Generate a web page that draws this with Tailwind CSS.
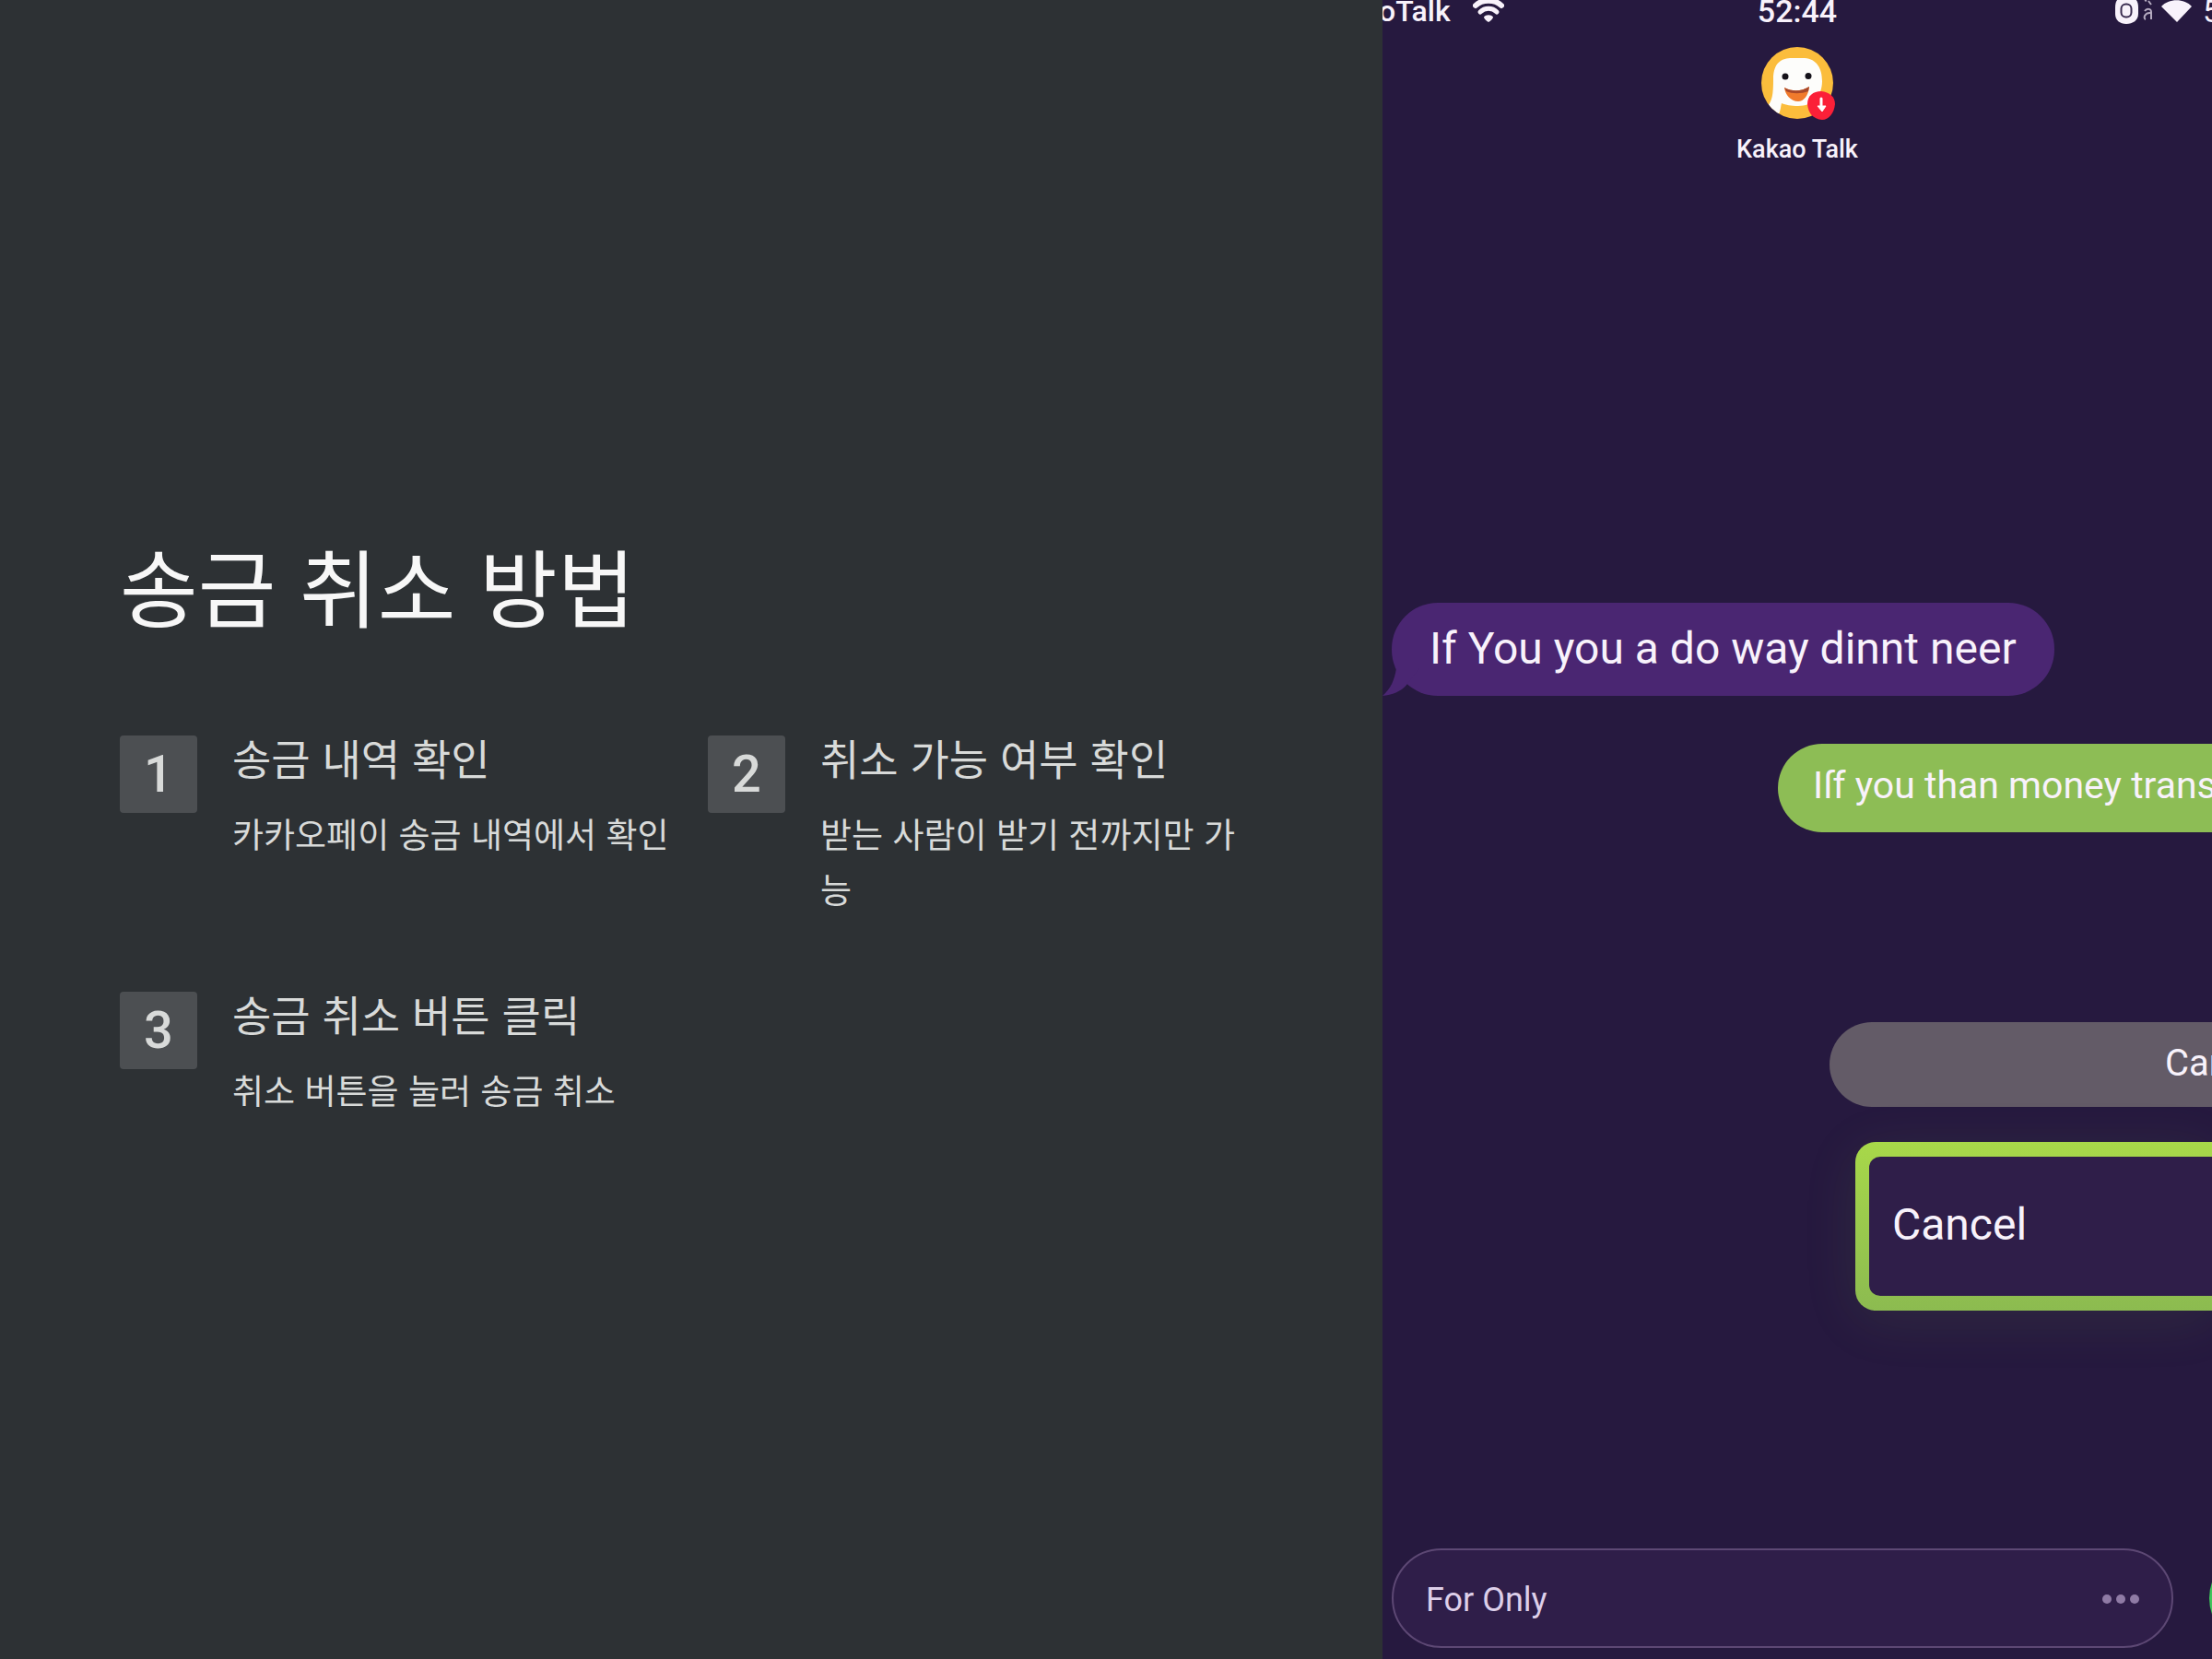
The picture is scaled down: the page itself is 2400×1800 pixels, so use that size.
<!DOCTYPE html>
<html lang="ko">
<head>
  <meta charset="UTF-8">
  <meta name="viewport" content="width=device-width, initial-scale=1.0">
  <title>송금 취소 방법</title>
  <script src="https://cdn.jsdelivr.net/npm/@tailwindcss/browser@4"></script>
</head>
<body class="bg-[#2d3134]">
  <main class="flex min-h-screen">

    <!-- Steps -->
    <section class="w-5/8 shrink-0 flex flex-col justify-center pl-[130px] pr-[136px] pb-[10px] text-[#d8dad9] font-['Noto_Sans_CJK_KR',sans-serif]">
      <h1 class="text-[92px] leading-[112px] text-[#f7f7f7]">송금 취소 방법</h1>

      <ol class="mt-[106px] grid grid-cols-2 gap-x-[42px] gap-y-20">
        <li class="flex items-start gap-[38px]">
          <span class="mt-0.5 size-[84px] shrink-0 rounded-sm bg-[#4c4f52] text-center text-[56px] leading-[84px] font-medium font-[Roboto,sans-serif]">1</span>
          <div>
            <h2 class="text-[46px] leading-[50px]">송금 내역 확인</h2>
            <p class="mt-7 text-[37px] leading-[60px]">카카오페이 송금 내역에서 확인</p>
          </div>
        </li>
        <li class="flex items-start gap-[38px]">
          <span class="mt-0.5 size-[84px] shrink-0 rounded-sm bg-[#4c4f52] text-center text-[56px] leading-[84px] font-medium font-[Roboto,sans-serif]">2</span>
          <div>
            <h2 class="text-[46px] leading-[50px]">취소 가능 여부 확인</h2>
            <p class="mt-7 text-[37px] leading-[60px]">받는 사람이 받기 전까지만 가능</p>
          </div>
        </li>
        <li class="flex items-start gap-[38px]">
          <span class="mt-0.5 size-[84px] shrink-0 rounded-sm bg-[#4c4f52] text-center text-[56px] leading-[84px] font-medium font-[Roboto,sans-serif]">3</span>
          <div>
            <h2 class="text-[46px] leading-[50px]">송금 취소 버튼 클릭</h2>
            <p class="mt-7 text-[37px] leading-[60px]">취소 버튼을 눌러 송금 취소</p>
          </div>
        </li>
      </ol>
    </section>

    <!-- Phone screen, runs off the right edge -->
    <section class="flex-1 min-w-0 flex flex-col overflow-hidden bg-[#26193f] text-[#f8f2fb] font-[Roboto,sans-serif]">
      <header class="grid grid-cols-[1fr_auto_1fr] h-8 items-start whitespace-nowrap">
        <div class="flex items-start gap-6 -ml-1">
          <span class="text-[32px] leading-[24px] font-medium">oTalk</span>
          <svg class="w-[34px] h-[28px] -mt-1" viewBox="0 0 34 28" fill="none" stroke="currentColor" stroke-linecap="round">
            <path d="M3 10C10 3 24 3 31 10" stroke-width="6"/>
            <path d="M8 17C13 12 21 12 26 17" stroke-width="5"/>
            <path d="M12 22.500C14 19.500 20 19.500 22 22.500C22 24 19 27 17 28C15 27 12 24 12 22.500Z" fill="currentColor" stroke="none"/>
          </svg>
        </div>
        <span class="text-[34px] leading-[24px] font-medium">52:44</span>
        <div class="flex items-start justify-end -mr-[9px]">
          <svg class="w-[84px] h-[28px] mr-3" viewBox="0 0 84 28" fill="none">
            <path d="M1 8C1 -1 6 -4 13 -4C21 -4 26 -1 26 8V15C26 22 20 26 13 26C6 26 1 22 1 15Z" fill="#f8f2fb"/>
            <rect x="7.500" y="4.500" width="11" height="14" rx="5" fill="#f8f2fb" stroke="#3a2c50" stroke-width="2"/>
            <path d="M33 0L35 1M37 1L40 5M33 12C35 9 40 9 40 13V21M40 14C33 13 31 20 34 21" stroke="#b5abc0" stroke-width="2"/>
            <path d="M51 7C59 -2 76 -2 84 7L68 24Z" fill="#f8f2fb"/>
          </svg>
          <span class="text-[34px] leading-[24px]">5</span>
        </div>
      </header>

      <div class="mt-[18px] flex flex-col items-center">
        <svg class="w-[84px] h-[82px]" viewBox="-3 0 84 82">
          <defs>
            <clipPath id="face"><circle cx="39" cy="40" r="39"/></clipPath>
          </defs>
          <circle cx="39" cy="40" r="39" fill="#fbbd3c"/>
          <g clip-path="url(#face)">
            <path d="M13 36C13 17 23 13 33 13H47C60 14 66 24 66 38C66 54 56 65 40 65C32 65 27 64 22 62C21 66 21 69 19 74L6 66C12 60 13 52 13 36Z" fill="#fdfdfb"/>
            <path d="M25 45C34 50 44 49 52 44C51 54 46 60 40 60C32 60 26 53 25 45Z" fill="#f07a2c"/>
            <path d="M25 45C34 50 44 49 52 44L51 49C43 52 34 52 27 49Z" fill="#a8482a"/>
            <circle cx="26" cy="33" r="3.500" fill="#15121a"/>
            <circle cx="51" cy="32.500" r="3.500" fill="#15121a"/>
          </g>
          <path d="M50 63C50 54 56 49 65 49C74 50 80 55 80 63C79 73 73 80 66 80C56 79 51 73 50 63Z" fill="#fb2038"/>
          <path d="M65 57V67" stroke="#fff" stroke-width="3" stroke-linecap="round"/>
          <path d="M61 65L66 71L70 65Z" fill="#fff" stroke="#fff" stroke-linejoin="round"/>
        </svg>
        <span class="mt-3 text-[27px] leading-9 font-medium">Kakao Talk</span>
      </div>

      <div class="mt-[474px] flex flex-col whitespace-nowrap">
        <div class="relative self-start ml-[10px] h-[101px] px-[41px] rounded-[50px] bg-[#4a2672] text-[48px] leading-[99px]">
          <svg class="absolute -left-[10px] bottom-0 w-[40px] h-[50px]" viewBox="0 0 40 50" fill="#4a2672">
            <path d="M15 20C13 33 9 42 0 50C11 49 21 45 27 37L40 20Z"/>
          </svg>
          <span class="relative">If You you a do way dinnt neer</span>
        </div>
        <div class="mt-[52px] ml-[429px] h-24 pl-[38px] rounded-l-full bg-[#8dbd55] text-[41px] leading-[90px]">Iſf you than money transfer</div>
        <button type="button" class="mt-[206px] ml-[485px] h-[92px] pl-[364px] pb-0.5 rounded-l-full bg-[#635b67] text-left text-[40px]">Cancel</button>
        <div class="mt-[38px] ml-[513px] h-[183px] py-4 pl-[15px] rounded-l-[22px] bg-linear-to-b from-[#a8d849] to-[#8cbb50] shadow-[0_10px_60px_#8cbb501a]">
          <button type="button" class="block size-full pl-[25px] pb-1 rounded-l-xl bg-[#2f1e49] text-left text-[48px]">Cancel</button>
        </div>
      </div>

      <form class="mt-auto mb-3 ml-[10px] -mr-[101px] flex items-center gap-[39px]">
        <div class="flex-1 min-w-0 h-[108px] px-[35px] flex items-center rounded-full border-2 border-[#5d4874] bg-[#2f1e49]">
          <input type="text" aria-label="Message" value="For Only" class="flex-1 min-w-0 pt-1 text-[36px] text-[#ddcfe9] outline-none">
          <button type="button" aria-label="More" class="flex gap-[5px] pt-0.5">
            <span class="size-[10px] rounded-full bg-[#8f7ba5]"></span>
            <span class="size-[10px] rounded-full bg-[#8f7ba5]"></span>
            <span class="size-[10px] rounded-full bg-[#8f7ba5]"></span>
          </button>
        </div>
        <button type="submit" aria-label="Send" class="size-[104px] shrink-0 rounded-full bg-[#3fc55b]"></button>
      </form>
    </section>

  </main>
</body>
</html>
